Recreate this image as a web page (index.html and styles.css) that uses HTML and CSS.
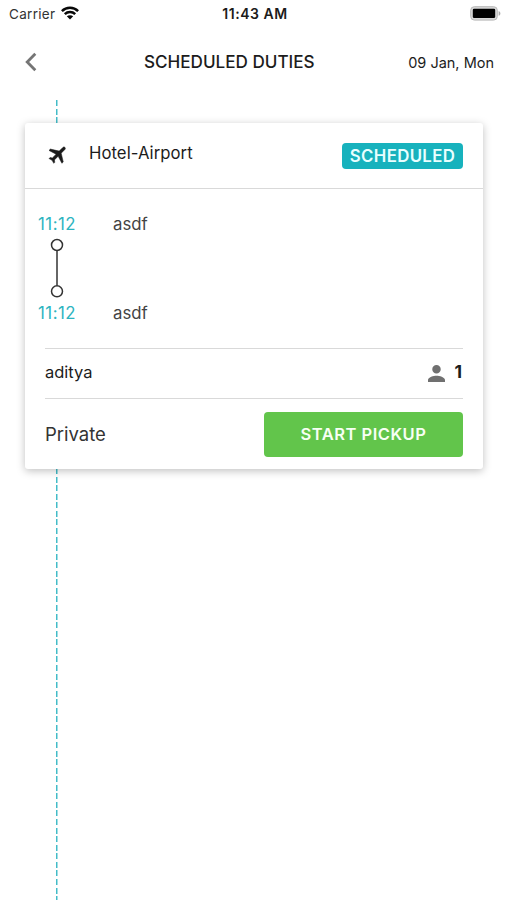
FILE: index.html
```html
<!DOCTYPE html>
<html lang="en">
<head>
<meta charset="utf-8">
<meta name="viewport" content="width=device-width, initial-scale=1">
<title>Scheduled Duties</title>
<link rel="stylesheet" href="styles.css">
</head>
<body>
<div class="status-bar">
  <div class="carrier"><span>Carrier</span>
    <svg class="wifi" viewBox="0 0 18 14" width="18" height="14"><g fill="none" stroke="#080808" stroke-width="2.5"><path d="M.9 5.1C5.4.7 12.6.7 17.1 5.1"/><path d="M3.8 8.2C6.7 5.4 11.3 5.4 14.2 8.2"/></g><path d="M9 13.5 5.8 10.3C7.6 8.8 10.4 8.8 12.2 10.3Z" fill="#080808"/></svg>
  </div>
  <div class="clock">11:43 AM</div>
  <svg class="battery" viewBox="0 0 31 15" width="31" height="15"><rect x=".7" y=".7" width="26.6" height="13.4" rx="3.6" fill="#d8d8d8" stroke="#b8b8b8" stroke-width="1"/><rect x="2.8" y="2.7" width="22.4" height="9.4" rx="1.4" fill="#000"/><path d="M28.6 5C31 5.8 31 9 28.6 9.8Z" fill="#aaa"/></svg>
</div>
<header class="header">
  <svg class="back" viewBox="0 0 12 20" width="12" height="20"><path d="M10.3 1.7 2.2 10l8.1 8.3" fill="none" stroke="#757575" stroke-width="2.8"/></svg>
  <h1 class="title">SCHEDULED DUTIES</h1>
  <div class="date">09 Jan, Mon</div>
</header>
<main class="timeline">
  <article class="card">
    <div class="card-head">
      <svg class="plane" viewBox="0 0 24 24" width="23" height="23"><path transform="rotate(45 12 12)" d="M21 16v-2l-8-5V3.500C13 2.670 12.330 2 11.500 2S10 2.670 10 3.500V9l-8 5v2l8-2.500V19l-2 1.500V22l3.500-1 3.500 1v-1.500L13 19v-5.500z" fill="#1b1b1b" stroke="#1b1b1b" stroke-width=".5"/></svg>
      <span class="trip">Hotel-Airport</span>
      <span class="badge">SCHEDULED</span>
    </div>
    <div class="route">
      <div class="stop"><span class="time">11:12</span><span class="place">asdf</span></div>
      <svg class="link" viewBox="0 0 14 60" width="14" height="60"><g fill="none" stroke="#333" stroke-width="1.5"><circle cx="7" cy="7" r="5.500"/><path d="M7 12.500V47.500"/><circle cx="7" cy="53.300" r="5.500"/></g></svg>
      <div class="stop"><span class="time">11:12</span><span class="place">asdf</span></div>
    </div>
    <div class="passenger">
      <span class="name">aditya</span>
      <svg class="person" viewBox="4 4 16 16" width="17" height="17" preserveAspectRatio="none"><path d="M12 12c2.210 0 4-1.790 4-4s-1.790-4-4-4-4 1.790-4 4 1.790 4 4 4zm0 2c-2.670 0-8 1.340-8 4v2h16v-2c0-2.660-5.330-4-8-4z" fill="#707070"/></svg>
      <span class="count">1</span>
    </div>
    <div class="card-foot">
      <span class="kind">Private</span>
      <button class="start" type="button"><span>START PICKUP</span></button>
    </div>
  </article>
</main>
</body>
</html>
```
FILE: styles.css
```css
* { box-sizing: border-box; }
body {
  margin: 0;
  height: 900px;
  overflow: hidden;
  display: flex;
  flex-direction: column;
  background: #fff;
  color: #1c1c1c;
  font-family: Inter, "Liberation Sans", sans-serif;
}
svg { display: block; flex: none; }
span { white-space: nowrap; }

.status-bar {
  display: grid;
  grid-template-columns: 1fr auto 1fr;
  align-items: center;
  height: 27px;
  padding: 0 6px 0 9px;
}
.carrier { display: flex; align-items: center; gap: 6px; font-size: 13.5px; letter-spacing: .3px; color: #333; }
.wifi { margin-top: -2px; }
.clock { font-size: 14px; font-weight: 600; letter-spacing: .55px; color: #1b1b1b; }
.battery { justify-self: end; margin-top: -1px; }

.header {
  display: grid;
  grid-template-columns: 119px auto 1fr;
  align-items: center;
  height: 70px;
  padding: 0 13px 1px 25px;
}
.title { margin: 0; font-size: 17.100px; font-weight: 500; }
.date { justify-self: end; padding-top: 1px; font-size: 14.500px; }

.timeline {
  flex: 1;
  margin-top: 3px;
  padding: 23px 24px 0 25px;
  background: repeating-linear-gradient(#43bcc8 0 6px, #fff 6px 8.560px) 56px 0 / 1.500px 100% no-repeat;
}
.card {
  height: 346px;
  border-radius: 3px;
  background: #fff;
  box-shadow: 0 2px 8px rgba(0, 0, 0, .25);
}
.card-head {
  display: flex;
  align-items: center;
  height: 66px;
  padding: 0 20px 0 22px;
  border-bottom: 1px solid #d9d9d9;
}
.plane { margin-top: -2px; }
.trip { margin: -5px auto 0 19px; font-size: 16.700px; letter-spacing: .05px; }
.badge {
  display: grid;
  place-items: center;
  width: 121px;
  height: 26px;
  border-radius: 4px;
  background: #17b2bd;
  color: #e9ffff;
  font-size: 16.800px;
  font-weight: 600;
  letter-spacing: .35px;
}
.route { height: 159px; padding: 23px 12px 0; color: #444; font-size: 16.800px; }
.stop { display: flex; height: 26px; line-height: 24px; }
.time { width: 76px; padding-left: 1px; letter-spacing: .5px; color: #2db4bf; }
.link { margin: 1px 0 2px 13px; height: 60px; }
.stop:first-child { height: 25px; }
.stop:last-child { line-height: 26px; }
.passenger {
  display: flex;
  align-items: center;
  height: 51px;
  margin: 0 20px;
  padding-bottom: 4px;
  border: solid #d9d9d9;
  border-width: 1px 0;
}
.name { margin-right: auto; font-size: 16.500px; }
.person { margin: 4px 9px 0 0; }
.count { margin-right: 1px; font-size: 17.500px; font-weight: 700; }
.card-foot {
  display: flex;
  align-items: center;
  justify-content: space-between;
  height: 70px;
  padding: 0 20px;
}
.kind { font-size: 18.500px; color: #333; }
.start {
  width: 199px;
  height: 45px;
  padding: 0;
  border: 0;
  border-radius: 4px;
  background: #62c54b;
  color: #f7fff4;
  font: 600 16.500px Inter, "Liberation Sans", sans-serif;
  letter-spacing: .5px;
}
```
